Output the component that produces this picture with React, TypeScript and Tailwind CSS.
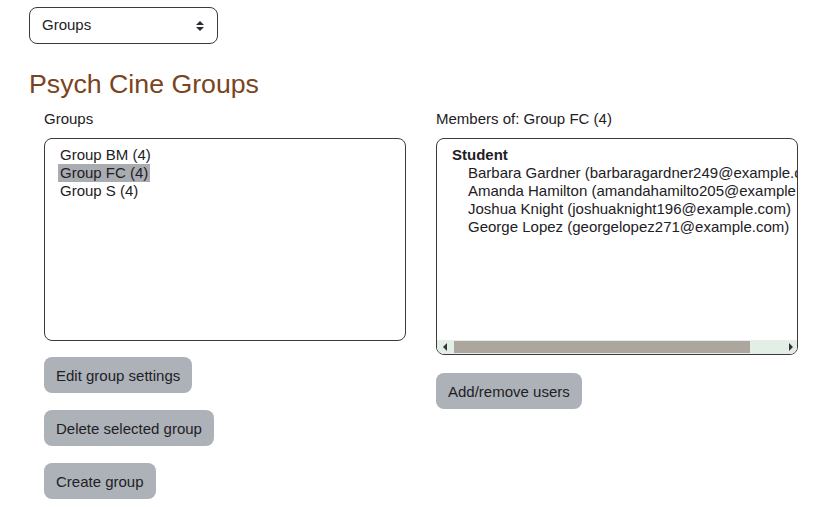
import React from "react";

const Btn: React.FC<{ label: string }> = ({ label }) => (
	<button className="h-[36px] px-[12px] rounded-[8px] bg-[#adb1b8] text-[#1d2125] text-[15px] leading-none self-start">
		{label}
	</button>
);

const members = [
	"Barbara Gardner (barbaragardner249@example.com)",
	"Amanda Hamilton (amandahamilto205@example.com)",
	"Joshua Knight (joshuaknight196@example.com)",
	"George Lopez (georgelopez271@example.com)",
];

export default function App() {
	return (
		<div
			className="w-[826px] h-[507px] bg-white text-[#1d2125] pl-[29px] pt-[7px] overflow-hidden"
			style={{ fontFamily: '"Liberation Sans", Arial, sans-serif' }}
		>
			{/* Group / grouping selector */}
			<div className="w-[189px] h-[37px] border border-[#3f383d] rounded-[8px] flex items-center justify-between pl-[12px] pr-[12px] text-[15px]">
				<span>Groups</span>
				<svg width="10" height="12" viewBox="0 0 10 12">
					<path d="M5 1 L9 5 L1 5 Z" fill="#2b2b33" />
					<path d="M5 11 L9 7 L1 7 Z" fill="#2b2b33" />
				</svg>
			</div>

			<h2 className="mt-[24px] text-[26.7px] leading-[32px] text-[#7a4420]">Psych Cine Groups</h2>

			<div className="flex gap-[30px] pl-[15px] mt-[10px] text-[15px]">
				{/* Groups column */}
				<div className="w-[362px] flex flex-col">
					<div className="h-[18px] leading-[18px]">Groups</div>
					<div className="mt-[10px] h-[203px] border border-[#3f383d] rounded-[8px] pt-[7px] pl-[13px] leading-[18px]">
						<div className="px-[2px] w-fit">Group BM (4)</div>
						<div className="px-[2px] w-fit bg-[#a9acb1]">Group FC (4)</div>
						<div className="px-[2px] w-fit">Group S (4)</div>
					</div>
					<div className="mt-[16px] flex flex-col gap-[17px]">
						<Btn label="Edit group settings" />
						<Btn label="Delete selected group" />
						<Btn label="Create group" />
					</div>
				</div>

				{/* Members column */}
				<div className="w-[362px] flex flex-col">
					<div className="h-[18px] leading-[18px]">Members of: Group FC (4)</div>
					<div className="mt-[10px] h-[217px] border border-[#3f383d] rounded-[8px] flex flex-col overflow-hidden">
						<div className="flex-1 pt-[7px] pl-[15px] leading-[18px] whitespace-nowrap overflow-hidden">
							<div className="font-bold">Student</div>
							{members.map((m) => (
								<div key={m} className="pl-[16px]">
									{m}
								</div>
							))}
						</div>
						{/* horizontal scrollbar */}
						<div className="h-[14px] bg-[#e3efe6] flex items-center pl-[5px] pr-[3px]">
							<svg width="6" height="8" viewBox="0 0 6 8">
								<path d="M5 0 L1 4 L5 8 Z" fill="#3a3038" />
							</svg>
							<div className="ml-[6px] h-[12px] w-[296px] bg-[#ada69f]" />
							<div className="flex-1" />
							<svg width="6" height="8" viewBox="0 0 6 8">
								<path d="M1 0 L5 4 L1 8 Z" fill="#3a3038" />
							</svg>
						</div>
					</div>
					<div className="mt-[18px] flex flex-col">
						<Btn label="Add/remove users" />
					</div>
				</div>
			</div>
		</div>
	);
}
